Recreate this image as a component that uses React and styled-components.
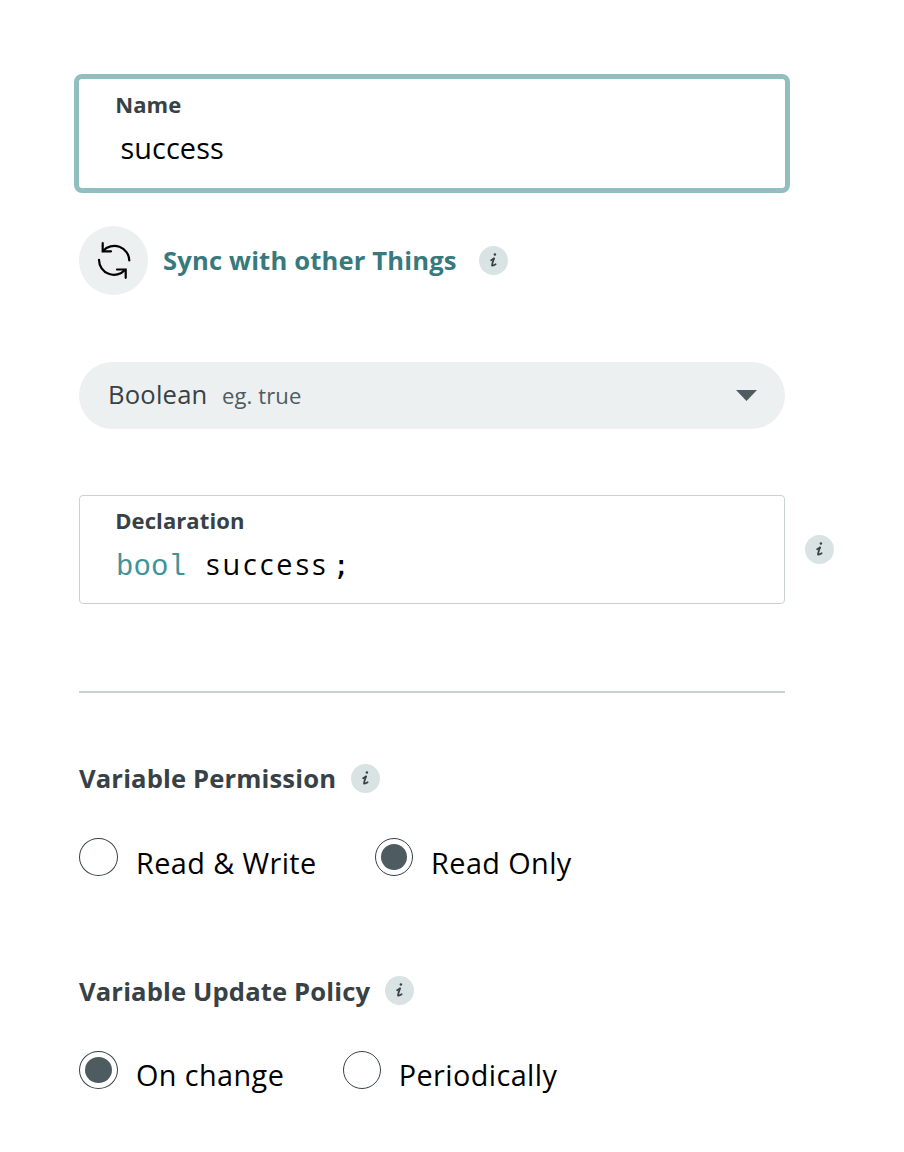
import React from "react";
import styled, { createGlobalStyle } from "styled-components";

const Global = createGlobalStyle`
  *{box-sizing:border-box}
  body{margin:0;background:#fff;font-family:"Open Sans","Noto Sans",sans-serif;color:#000}
`;
const Page = styled.main`
  width:904px;height:1152px;padding:74px 0 0 79px;display:flex;flex-direction:column;align-items:flex-start;overflow:hidden;background:#fff;
`;
const Field = styled.div`
  width:${p => (p.$focus ? 716 : 706)}px;height:${p => (p.$focus ? 119 : 109)}px;
  margin-left:${p => (p.$focus ? -5 : 0)}px;
  border:${p => (p.$focus ? "5px solid #91bfc0" : "1px solid #c9d2d2")};
  border-radius:${p => (p.$focus ? 8 : 4)}px;
  padding:${p => (p.$focus ? "10px 36px" : "9px 35px")};
  display:flex;flex-direction:column;
`;
const FieldLabel = styled.label`
  font-size:22px;font-weight:700;line-height:30px;letter-spacing:.1px;color:#374146;padding-left:.2px;
`;
const Value = styled.div`
  font-size:28.8px;line-height:38px;letter-spacing:.1px;padding:10px 0 0 5.5px;
`;
const SyncRow = styled.div`
  display:flex;align-items:center;margin-top:33px;height:69px;
`;
const SyncButton = styled.button`
  width:69px;height:69px;border:0;border-radius:50%;background:#ecf0f1;display:grid;place-items:center;padding:0;margin-right:15px;
`;
const SyncText = styled.span`
  width:294px;font-size:25.6px;font-weight:700;letter-spacing:.16px;line-height:36px;color:#37797d;margin-right:22px;white-space:nowrap;
`;
const Badge = styled.span`
  width:29px;height:29px;border-radius:50%;background:#dae3e3;display:grid;place-items:center;flex:none;
`;
const Select = styled.div`
  width:706px;height:67px;margin-top:67px;border-radius:34px;background:#ecf0f1;display:flex;align-items:center;padding:0 28px 0 29px;
  color:#374146;font-size:25.6px;letter-spacing:.2px;
`;
const Selected = styled.span`
  line-height:36px;padding-bottom:2px;
`;
const Hint = styled.span`
  font-size:22px;letter-spacing:.12px;line-height:32px;color:#4e5b61;margin-left:14.5px;padding-bottom:1px;flex:1;
`;
const DeclRow = styled.div`
  display:flex;align-items:center;gap:20px;margin-top:66px;
`;
const Code = styled.code`
  font-family:"Open Sans",sans-serif;font-size:28.8px;line-height:38px;padding:10px 0 0 1px;display:flex;align-items:baseline;
`;
const Type = styled.span`
  font-family:"Liberation Mono",monospace;font-size:29.1px;color:#3f9499;width:90px;
`;
const Ident = styled.span`
  letter-spacing:2.85px;width:126.5px;
`;
const Mark = styled.span`
  font-family:"DejaVu Sans Mono",monospace;font-size:29px;
`;
const Rule = styled.hr`
  width:706px;height:2px;border:0;background:#c9d2d2;margin:87px 0 0;
`;
const Heading = styled.div`
  display:flex;align-items:center;gap:15px;height:36px;margin-top:${p => p.$top}px;
`;
const Title = styled.h2`
  margin:0;font-size:25.6px;line-height:36px;letter-spacing:.14px;color:#374146;padding-top:${p => p.$drop}px;
`;
const Options = styled.div`
  display:flex;gap:58.5px;margin-top:${p => p.$top}px;height:43px;
`;
const Option = styled.label`
  display:flex;gap:18px;font-size:28.8px;line-height:38px;letter-spacing:.42px;
`;
const OptionText = styled.span`
  padding-top:${p => p.$drop}px;
`;
const Radio = styled.span`
  width:${p => p.$w}px;height:38px;border:1px solid #374146;border-radius:50%;display:grid;place-items:center;flex:none;
  &::after{content:"";width:${p => p.$w - 12}px;height:26px;border-radius:50%;background:${p => (p.$on ? "#4e5b61" : "transparent")};}
`;

const Info = () => (
  <Badge>
    <svg width="29" height="29" viewBox="0 0 29 29" fill="none" stroke="#374146" strokeLinecap="round" strokeLinejoin="round">
      <circle cx="15.9" cy="8.5" r="1.25" fill="#374146" stroke="none" />
      <path d="M12.2 14.3L15 12.5" strokeWidth="1.9" />
      <path d="M15 12.5C14.2 15 13.1 17.2 13 19.6C14 19.8 15.2 19 16.6 18.3" strokeWidth="1.8" />
    </svg>
  </Badge>
);
const Choice = ({ on, w = 38, drop = 6, children }) => (
  <Option><Radio $on={on} $w={w} /><OptionText $drop={drop}>{children}</OptionText></Option>
);

export default function App() {
  return (
    <>
      <Global />
      <Page>
        <Field $focus>
          <FieldLabel>Name</FieldLabel>
          <Value>success</Value>
        </Field>
        <SyncRow>
          <SyncButton aria-label="Sync">
            <svg width="69" height="69" viewBox="0 0 69 69" fill="none" stroke="#000" strokeWidth="2.2" strokeLinecap="round">
              <path d="M23.7 17.2V25.3H32" />
              <path d="M24 25A15 15 0 0 1 50.3 34.5" />
              <path d="M20 33.8A15 15 0 0 0 46.2 43.8" />
              <path d="M38 43.5H46.7V51.8" />
            </svg>
          </SyncButton>
          <SyncText>Sync with other Things</SyncText>
          <Info />
        </SyncRow>
        <Select>
          <Selected>Boolean</Selected>
          <Hint>eg. true</Hint>
          <svg width="21" height="11" viewBox="0 0 21 11"><path d="M0 0H21L10.5 11Z" fill="#4e5b61" /></svg>
        </Select>
        <DeclRow>
          <Field>
            <FieldLabel>Declaration</FieldLabel>
            <Code><Type>bool</Type><Ident>success</Ident><Mark>;</Mark></Code>
          </Field>
          <Info />
        </DeclRow>
        <Rule />
        <Heading $top={67}><Title $drop={2}>Variable Permission</Title><Info /></Heading>
        <Options $top={42}><Choice w={39}>Read &amp; Write</Choice><Choice on>Read Only</Choice></Options>
        <Heading $top={91}><Title $drop={4}>Variable Update Policy</Title><Info /></Heading>
        <Options $top={43}><Choice on w={39} drop={5}>On change</Choice><Choice drop={5}>Periodically</Choice></Options>
      </Page>
    </>
  );
}
